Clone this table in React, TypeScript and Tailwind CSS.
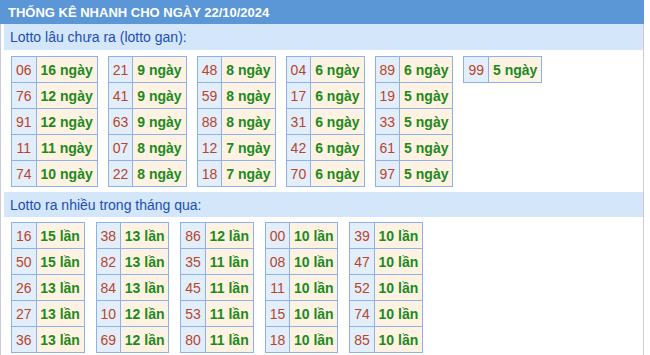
import React from 'react';

type Row = [string, string];

const ganTables: Row[][] = [
  [['06', '16 ngày'], ['76', '12 ngày'], ['91', '12 ngày'], ['11', '11 ngày'], ['74', '10 ngày']],
  [['21', '9 ngày'], ['41', '9 ngày'], ['63', '9 ngày'], ['07', '8 ngày'], ['22', '8 ngày']],
  [['48', '8 ngày'], ['59', '8 ngày'], ['88', '8 ngày'], ['12', '7 ngày'], ['18', '7 ngày']],
  [['04', '6 ngày'], ['17', '6 ngày'], ['31', '6 ngày'], ['42', '6 ngày'], ['70', '6 ngày']],
  [['89', '6 ngày'], ['19', '5 ngày'], ['33', '5 ngày'], ['61', '5 ngày'], ['97', '5 ngày']],
  [['99', '5 ngày']]
];

const nhieuTables: Row[][] = [
  [['16', '15 lần'], ['50', '15 lần'], ['26', '13 lần'], ['27', '13 lần'], ['36', '13 lần']],
  [['38', '13 lần'], ['82', '13 lần'], ['84', '13 lần'], ['10', '12 lần'], ['69', '12 lần']],
  [['86', '12 lần'], ['35', '11 lần'], ['45', '11 lần'], ['53', '11 lần'], ['80', '11 lần']],
  [['00', '10 lần'], ['08', '10 lần'], ['11', '10 lần'], ['15', '10 lần'], ['18', '10 lần']],
  [['39', '10 lần'], ['47', '10 lần'], ['52', '10 lần'], ['74', '10 lần'], ['85', '10 lần']]
];

const LottoTable: React.FC<{ rows: Row[]; tight?: boolean }> = ({ rows, tight }) => (
  <table className="border-collapse">
    <tbody>
      {rows.map(([num, label], i) => (
        <tr key={i} className="h-[26px]">
          <td className="border border-[#8db0ee] bg-[#e3eefb] px-[4px] text-center text-[#b8442b]">{num}</td>
          <td
            className={`border border-[#8db0ee] bg-[#fef3e2] text-center font-bold text-[#1d8a1d] ${
              tight ? 'w-[48px] px-[3px]' : 'px-[4px]'
            }`}
          >
            {label}
          </td>
        </tr>
      ))}
    </tbody>
  </table>
);

const SubHeader: React.FC<{ title: string; tall?: boolean }> = ({ title, tall }) => (
  <div className={`ml-[3px] flex items-center bg-[#d3e6fa] pl-[6px] text-[14px] text-[#1d4fae] ${tall ? 'h-[26px]' : 'h-[25px]'}`}>
    {title}
  </div>
);

export default function App() {
  return (
    <div className="w-[644px] bg-white font-['Liberation_Sans',Arial,sans-serif] text-[14px] leading-none">
      <div className="flex h-[24px] items-center bg-[#5b97d7] pl-[8px] text-[13px] font-bold text-white">
        THỐNG KÊ NHANH CHO NGÀY 22/10/2024
      </div>
      <div className="border-x border-[#c9cbd6] pb-[3px]">
        <SubHeader title="Lotto lâu chưa ra (lotto gan):" tall />
        <div className="flex items-start gap-[10px] py-[6px] pb-[5px] pl-[10px]">
          {ganTables.map((rows, i) => (
            <LottoTable key={i} rows={rows} />
          ))}
        </div>
        <SubHeader title="Lotto ra nhiều trong tháng qua:" />
        <div className="flex items-start gap-[11px] pt-[5px] pl-[10px]">
          {nhieuTables.map((rows, i) => (
            <LottoTable key={i} rows={rows} tight />
          ))}
        </div>
      </div>
    </div>
  );
}
